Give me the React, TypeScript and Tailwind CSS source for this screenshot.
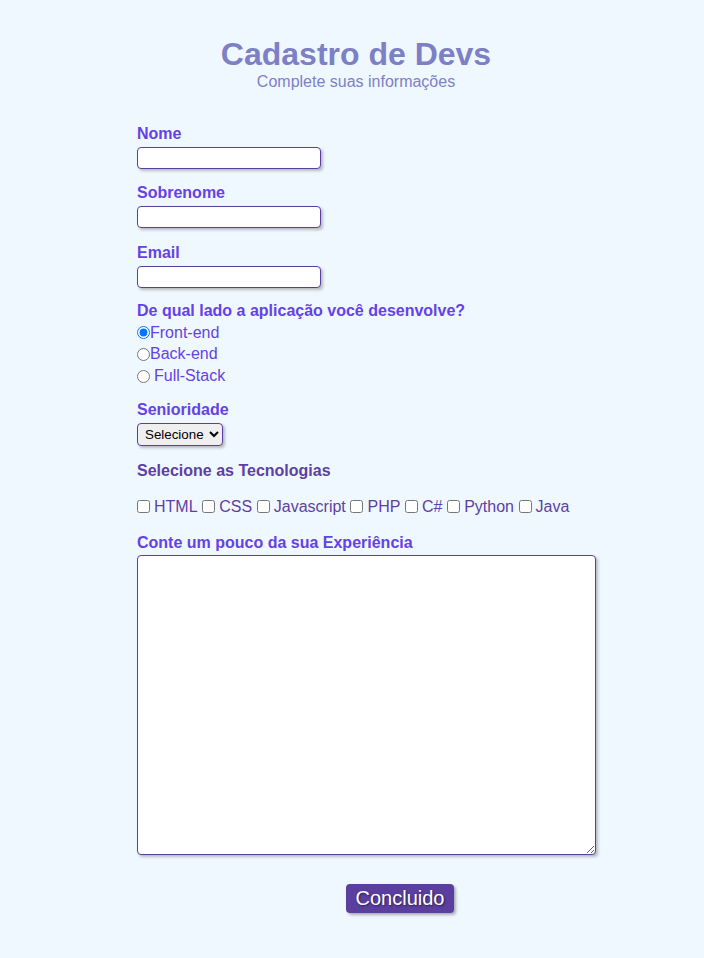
import React from "react";

const label = "block h-[18px] leading-[18px] text-[16px] font-bold text-[#6442e6]";
const inputCls =
  "block h-[22px] w-[184px] rounded-[4px] border border-[#5a3fa0] bg-white shadow-[2px_2px_3px_rgba(0,0,0,0.25)] outline-none";

export default function App() {
  const techs = ["HTML", "CSS", "Javascript", "PHP", "C#", "Python", "Java"];
  return (
    <div
      className="min-h-[958px] w-full bg-[#f0f8ff] pt-[36px]"
      style={{ fontFamily: '"Liberation Sans", Arial, sans-serif' }}
    >
      <div className="flex flex-col items-center pl-[8px]">
        <h1 className="text-[32px] font-bold leading-[37px] text-[#7d80c6]">Cadastro de Devs</h1>
        <p className="text-[16px] leading-[18px] text-[#7d80c6]">Complete suas informações</p>
      </div>

      <form className="ml-[137px] mt-[34px] w-[460px]">
        <label className={label}>Nome</label>
        <input className={`${inputCls} mt-[4px] mb-[15px]`} />
        <label className={label}>Sobrenome</label>
        <input className={`${inputCls} mt-[4px] mb-[16px]`} />
        <label className={label}>Email</label>
        <input className={`${inputCls} mt-[4px] mb-[14px]`} />

        <label className={label}>De qual lado a aplicação você desenvolve?</label>
        <div className="mt-[2px] flex flex-col text-[16px] text-[#6442e6]">
          <label className="flex h-[21px] items-center">
            <input type="radio" name="lado" defaultChecked className="m-0 h-[13px] w-[13px]" />
            <span>Front-end</span>
          </label>
          <label className="flex h-[22px] items-center">
            <input type="radio" name="lado" className="m-0 h-[13px] w-[13px]" />
            <span>Back-end</span>
          </label>
          <label className="flex h-[22px] items-center">
            <input type="radio" name="lado" className="m-0 h-[13px] w-[13px]" />
            <span className="ml-[4px]">Full-Stack</span>
          </label>
        </div>

        <label className={`${label} mt-[14px]`}>Senioridade</label>
        <select className="mt-[4px] block h-[23px] w-[86px] rounded-[4px] border border-[#5a3fa0] bg-[#efefef] pl-[3px] text-[13.33px] text-black shadow-[2px_2px_3px_rgba(0,0,0,0.25)]">
          <option>Selecione</option>
        </select>

        <label className="mt-[16px] block h-[18px] text-[16px] font-bold leading-[18px] text-[#5e3fa2]">
          Selecione as Tecnologias
        </label>
        <div className="mt-[16px] flex h-[21px] items-center text-[16px] text-[#5e3fa2]">
          {techs.map((t) => (
            <label key={t} className="mr-[4.67px] flex items-center">
              <input type="checkbox" className="m-0 mr-[4px] h-[13px] w-[13px]" />
              <span>{t}</span>
            </label>
          ))}
        </div>

        <label className={`${label} mt-[17px]`}>Conte um pouco da sua Experiência</label>
        <textarea className="mt-[3px] block h-[300px] w-[459px] rounded-[4px] border border-[#5a3fa0] bg-white shadow-[2px_2px_3px_rgba(0,0,0,0.25)] outline-none" />

        <div className="mt-[29px] pl-[209px]">
          <button
            type="button"
            className="h-[29px] w-[108px] rounded-[4px] bg-[#5a3f9e] text-[20px] leading-[29px] text-white shadow-[2px_2px_3px_rgba(0,0,0,0.3)] [text-shadow:1px_1px_2px_rgba(0,0,0,0.5)]"
          >
            Concluido
          </button>
        </div>
      </form>
    </div>
  );
}
